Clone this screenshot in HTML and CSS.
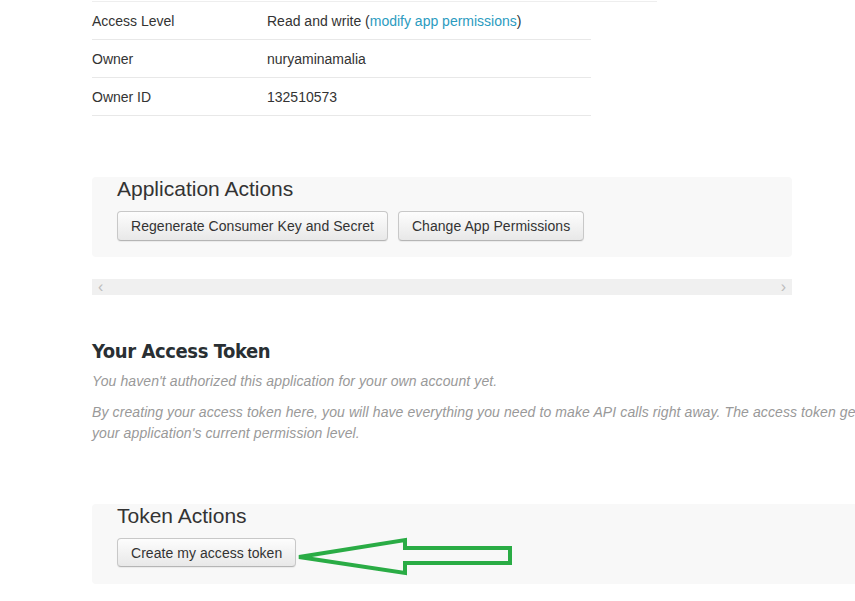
FILE: index.html
```html
<!DOCTYPE html>
<html>
<head>
<meta charset="utf-8">
<link rel="stylesheet" href="styles.css">
</head>
<body>
<div class="page">
  <div class="topline"></div>
  <div class="details">
    <div class="row"><div class="label">Access Level</div><div class="value">Read and write (<a class="link">modify app permissions</a>)</div></div>
    <div class="row"><div class="label">Owner</div><div class="value">nuryaminamalia</div></div>
    <div class="row"><div class="label">Owner ID</div><div class="value">132510573</div></div>
  </div>

  <div class="actions app-actions">
    <h3 class="actions-title">Application Actions</h3>
    <div class="buttons">
      <button class="btn">Regenerate Consumer Key and Secret</button>
      <button class="btn">Change App Permissions</button>
    </div>
  </div>

  <div class="scrollbar"><span class="arrow-l">&#8249;</span><span class="arrow-r">&#8250;</span></div>

  <h2 class="section-title">Your Access Token</h2>
  <p class="note">You haven't authorized this application for your own account yet.</p>
  <p class="note note-wide">By creating your access token here, you will have everything you need to make API calls right away. The access token generated will be assigned your application's current permission level.</p>

  <div class="actions token-actions">
    <h3 class="actions-title">Token Actions</h3>
    <div class="buttons">
      <button class="btn btn-token">Create my access token</button>
    </div>
  </div>
</div>
<svg class="pointer" width="230" height="50" viewBox="0 0 230 50">
  <polygon points="9,27 115,10 115,18 220,18 220,33 115,33 115,43" fill="none" stroke="#2aac45" stroke-width="4" stroke-linejoin="miter"/>
</svg>
</body>
</html>
```
FILE: styles.css
```css
html, body {
  margin: 0;
  padding: 0;
  background: #fff;
  overflow: hidden;
}
body {
  width: 855px;
  height: 601px;
  position: relative;
  font-family: "Liberation Sans", Arial, sans-serif;
  font-size: 14px;
  color: #333;
}
.page {
  padding-left: 92px;
}
.topline {
  width: 565px;
  height: 1px;
  margin-top: 1px;
  background: #eee;
}
.details {
  width: 499px;
}
.row {
  display: flex;
  height: 37px;
  align-items: center;
  border-bottom: 1px solid #e8e8e8;
}
.label {
  width: 175px;
}
.link {
  color: #2b9bc0;
}
.actions {
  background: #f8f8f8;
  border-radius: 4px;
  padding: 0 25px 16px;
  margin-top: 61px;
  width: 650px;
}
.token-actions {
  margin-top: 60px;
  width: 800px;
  padding-bottom: 17px;
}
.actions-title {
  margin: 0 0 10px;
  font-size: 21px;
  line-height: 24px;
  font-weight: normal;
  color: #333;
}
.buttons {
  display: flex;
  gap: 10px;
}
.btn {
  font-family: "Liberation Sans", Arial, sans-serif;
  font-size: 14px;
  letter-spacing: 0.05px;
  color: #333;
  height: 30px;
  padding: 0 13px;
  border: 1px solid #c8c8c8;
  border-bottom-color: #b5b5b5;
  border-radius: 4px;
  background: linear-gradient(#fdfdfd, #e8e8e8);
  box-shadow: 0 1px 1px rgba(0,0,0,0.06);
}
.btn-token {
  height: 29px;
}
.scrollbar {
  margin-top: 22px;
  width: 700px;
  height: 16px;
  background: #f0f0f0;
  display: flex;
  justify-content: space-between;
  align-items: center;
  color: #bdbdbd;
  font-size: 16px;
  line-height: 16px;
  box-sizing: border-box;
  padding: 0 6px;
}
.section-title {
  margin: 43px 0 0;
  font-family: "DejaVu Sans", sans-serif;
  font-stretch: condensed;
  font-weight: bold;
  font-size: 20px;
  line-height: 26px;
  color: #292f33;
  letter-spacing: -0.4px;
}
.note {
  margin: 7px 0 0;
  width: 790px;
  font-style: italic;
  font-size: 14px;
  line-height: 21px;
  letter-spacing: 0.1px;
  color: #999;
}
.note-wide {
  margin-top: 10px;
  width: 938px;
}
.pointer {
  position: absolute;
  left: 290px;
  top: 530px;
}
```
